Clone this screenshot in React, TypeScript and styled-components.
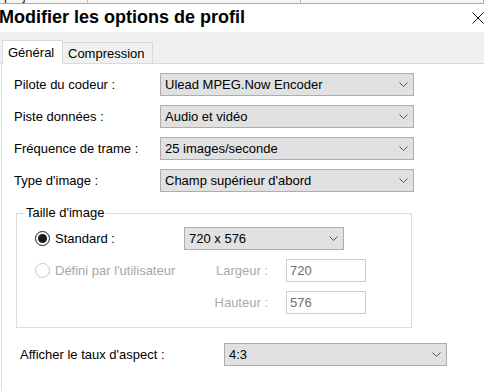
import { createGlobalStyle, styled } from "styled-components";

const GlobalStyle = createGlobalStyle`
  body {
    margin: 0;
    background: #fff;
    font-family: "Liberation Sans", Arial, sans-serif;
    font-size: 13px;
    color: #000;
  }
`;

const Window = styled.div`
  width: 484px;
  height: 391px;
  overflow: hidden;
  display: flex;
  flex-direction: column;
  background: #fff;
`;

/* bit of the window behind, peeking at the top */
const BehindStrip = styled.div`
  height: 3px;
  flex: none;
  display: flex;
  align-items: flex-end;
  overflow: hidden;
  background: #f7f4f4;
  border-bottom: 1px solid #cf9a9a;
`;

const BehindCell = styled.div<{ $width?: number }>`
  width: ${(p) => (p.$width ? `${p.$width}px` : "auto")};
  flex: ${(p) => (p.$width ? "none" : "1")};
  height: 14px;
  line-height: 14px;
  padding-left: 4px;
  box-sizing: border-box;
  border-right: 1px solid #b9b9b9;
  color: #222;
`;

const TitleBar = styled.div`
  height: 28px;
  flex: none;
  display: flex;
  justify-content: space-between;
  align-items: flex-start;
`;

const Title = styled.h1`
  margin: 0 0 0 -1px;
  padding-top: 2px;
  font-size: 18px;
  line-height: 22px;
  font-weight: 700;
  white-space: nowrap;
`;

const Close = styled.svg`
  margin-top: 8px;
  flex: none;
`;

const TabBar = styled.div`
  height: 32px;
  flex: none;
  box-sizing: border-box;
  display: flex;
  align-items: flex-end;
  padding-left: 2px;
  background: #f0f0f0;
  border-bottom: 1px solid #dadada;
`;

const Tab = styled.div<{ $active?: boolean }>`
  box-sizing: border-box;
  display: flex;
  align-items: center;
  padding: 0 5px;
  border: 1px solid #d9d9d9;
  border-bottom: none;
  ${(p) =>
    p.$active
      ? `
    width: 61px;
    height: 24px;
    margin-bottom: -1px;
    background: #fff;
  `
      : `
    width: 90px;
    height: 21px;
    border-left: none;
    background: #f0f0f0;
  `}
`;

const Panel = styled.div`
  flex: 1;
  margin-left: 1px;
  border-left: 1px solid #d9d9d9;
  padding: 9px 0 0 12px;
  display: flex;
  flex-direction: column;
`;

const Fields = styled.div`
  display: flex;
  flex-direction: column;
  gap: 9px;
`;

const Row = styled.div<{ $indent?: number }>`
  display: flex;
  align-items: center;
  height: 23px;
  padding-left: ${(p) => p.$indent ?? 0}px;
`;

const Label = styled.span<{ $width: number }>`
  width: ${(p) => p.$width}px;
  flex: none;
  white-space: nowrap;
`;

const Select = styled.div<{ $width: number }>`
  width: ${(p) => p.$width}px;
  height: 23px;
  flex: none;
  box-sizing: border-box;
  display: flex;
  align-items: center;
  justify-content: space-between;
  padding: 0 5px 0 4px;
  background: #e1e1e1;
  border: 1px solid #adadad;
  white-space: nowrap;
`;

const GroupBox = styled.fieldset`
  margin: 14px 0 0 2px;
  padding: 0;
  width: 396px;
  min-width: 0;
  box-sizing: border-box;
  border: 1px solid #dcdcdc;
`;

const Legend = styled.legend`
  margin-left: 7px;
  padding: 0 2px;
  line-height: 14px;
`;

const GroupBody = styled.div`
  padding: 7px 0 13px 18px;
  display: flex;
  flex-direction: column;
  gap: 9px;
`;

const RadioOption = styled.label<{ $disabled?: boolean }>`
  width: 149px;
  flex: none;
  display: flex;
  align-items: center;
  gap: 5px;
  color: ${(p) => (p.$disabled ? "#a6a6a6" : "#000")};
  white-space: nowrap;
`;

const RadioDot = styled.span<{ $checked?: boolean }>`
  width: 15px;
  height: 15px;
  flex: none;
  box-sizing: border-box;
  border-radius: 50%;
  border: 1px solid ${(p) => (p.$checked ? "#1a1a1a" : "#c6c6c6")};
  background: #fff;
  display: flex;
  align-items: center;
  justify-content: center;

  &::after {
    content: "";
    width: 9px;
    height: 9px;
    border-radius: 50%;
    background: ${(p) => (p.$checked ? "#1a1a1a" : "transparent")};
  }
`;

const FieldLabel = styled.span`
  width: 84px;
  flex: none;
  margin-right: 18px;
  text-align: right;
  color: #ababab;
  white-space: nowrap;
`;

const Spacer = styled.span`
  width: 149px;
  flex: none;
`;

const TextBox = styled.div`
  width: 80px;
  height: 23px;
  flex: none;
  box-sizing: border-box;
  display: flex;
  align-items: center;
  padding-left: 3px;
  border: 1px solid #cdcdcd;
  color: #6d6d6d;
`;

const AspectRow = styled(Row)`
  margin-top: 15px;
`;

const Chevron = () => (
  <svg width="9" height="5" viewBox="0 0 9 5">
    <polyline points="0.5,0.5 4.5,4.5 8.5,0.5" fill="none" stroke="#555" strokeWidth="1" />
  </svg>
);

interface DropdownProps {
  width: number;
  value: string;
}

const Dropdown: React.FC<DropdownProps> = ({ width, value }) => (
  <Select $width={width}>
    <span>{value}</span>
    <Chevron />
  </Select>
);

const rows = [
  ["Pilote du codeur :", "Ulead MPEG.Now Encoder"],
  ["Piste données :", "Audio et vidéo"],
  ["Fréquence de trame :", "25 images/seconde"],
  ["Type d'image :", "Champ supérieur d'abord"],
];

const App = () => {
  return (
    <Window>
      <GlobalStyle />
      <BehindStrip>
        <BehindCell $width={88}>projet :</BehindCell>
        <BehindCell $width={213}>DVD</BehindCell>
        <BehindCell />
      </BehindStrip>

      <TitleBar>
        <Title>Modifier les options de profil</Title>
        <Close width="12" height="12" viewBox="0 0 12 12">
          <path d="M0.5 0.5 L11.5 11.5 M11.5 0.5 L0.5 11.5" stroke="#111" strokeWidth="1" />
        </Close>
      </TitleBar>

      <TabBar>
        <Tab $active>Général</Tab>
        <Tab>Compression</Tab>
      </TabBar>

      <Panel>
        <Fields>
          {rows.map(([label, value]) => (
            <Row key={label}>
              <Label $width={146}>{label}</Label>
              <Dropdown width={254} value={value} />
            </Row>
          ))}
        </Fields>

        <GroupBox>
          <Legend>Taille d'image</Legend>
          <GroupBody>
            <Row>
              <RadioOption>
                <RadioDot $checked />
                Standard :
              </RadioOption>
              <Dropdown width={160} value="720 x 576" />
            </Row>
            <Row>
              <RadioOption $disabled>
                <RadioDot />
                Défini par l'utilisateur
              </RadioOption>
              <FieldLabel>Largeur :</FieldLabel>
              <TextBox>720</TextBox>
            </Row>
            <Row>
              <Spacer />
              <FieldLabel>Hauteur :</FieldLabel>
              <TextBox>576</TextBox>
            </Row>
          </GroupBody>
        </GroupBox>

        <AspectRow $indent={6}>
          <Label $width={204}>Afficher le taux d'aspect :</Label>
          <Dropdown width={223} value="4:3" />
        </AspectRow>
      </Panel>
    </Window>
  );
};

export default App;
